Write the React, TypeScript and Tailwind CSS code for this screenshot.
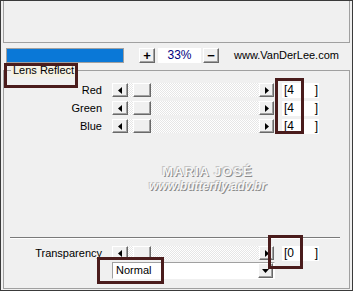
import type { ReactNode } from "react";

function Btn({ children, className }: { children?: ReactNode; className: string }) {
  return (
    <div
      className={
        "flex items-center justify-center bg-[#f0f0f0] border border-t-white border-l-white border-r-[#696969] border-b-[#696969] shadow-[inset_-1px_-1px_0_#a0a0a0] " +
        className
      }
    >
      {children}
    </div>
  );
}

function LeftTri() {
  return (
    <svg width="4" height="7" viewBox="0 0 4 7">
      <polygon points="4,0 4,7 0,3.5" fill="#000" />
    </svg>
  );
}

function RightTri() {
  return (
    <svg width="4" height="7" viewBox="0 0 4 7">
      <polygon points="0,0 0,7 4,3.5" fill="#000" />
    </svg>
  );
}

function DownTri() {
  return (
    <svg width="7" height="4" viewBox="0 0 7 4">
      <polygon points="0,0 7,0 3.5,4" fill="#000" />
    </svg>
  );
}

function SliderRow({ label, value }: { label: string; value: string }) {
  return (
    <div className="flex h-[14px] items-center">
      <div className="w-[99px] pr-[1px] text-right leading-none">{label}</div>
      <Btn className="ml-[9px] h-[14px] w-[16px]">
        <LeftTri />
      </Btn>
      <div className="flex h-[14px] w-[131px] items-center bg-[repeating-conic-gradient(#e6e6e6_0%_25%,#ffffff_0%_50%)] bg-[length:2px_2px]">
        <Btn className="ml-[5px] h-[14px] w-[18px]" />
      </div>
      <Btn className="h-[14px] w-[15px]">
        <RightTri />
      </Btn>
      <div className="ml-[8px] flex h-[15px] w-[37px] items-center justify-between bg-white pl-[2px] pr-[1px] text-[12px] leading-none">
        <span>[{value}</span>
        <span>]</span>
      </div>
    </div>
  );
}

export default function App() {
  return (
    <div className="relative h-[291px] w-[353px] overflow-hidden border border-[#3a3a3a] bg-[#f0f0f0] font-['Liberation_Sans',Arial,sans-serif] text-[11px] text-black">
      {/* preview area */}
      <div className="ml-[2px] h-[42px] w-[347px] border-x border-b border-[#a0a0a0]" />

      {/* progress / zoom row */}
      <div className="mt-[4px] flex h-[16px] items-center">
        <div className="ml-[5px] h-[15px] w-[118px] border border-[#a0a0a0] bg-[#0a78d7]" />
        <Btn className="ml-[15px] h-[15px] w-[16px] text-[13px] font-bold leading-none">+</Btn>
        <div className="ml-[3px] flex h-[15px] w-[43px] items-center justify-center bg-white text-[12px] text-[#000080]">
          33%
        </div>
        <Btn className="ml-[2px] h-[15px] w-[16px] text-[13px] font-bold leading-none">−</Btn>
        <div className="ml-[15px] text-[11px]">www.VanDerLee.com</div>
      </div>

      {/* group box */}
      <div className="relative ml-[2px] mt-[7px] h-[219px] w-[347px] border border-[#a0a0a0]">
        <div className="absolute left-[7px] top-[-7px] bg-[#f4f1e4] px-[2px] text-[11px] leading-[13px]">
          Lens Reflect
        </div>

        <div className="flex flex-col gap-[4px] pt-[12px]">
          <SliderRow label="Red" value="4" />
          <SliderRow label="Green" value="4" />
          <SliderRow label="Blue" value="4" />
        </div>

        <div className="mt-[31px] pl-[62px] text-center font-bold text-[#f6f6f6]">
          <div className="text-[13px] leading-[15px] tracking-[1px] [text-shadow:1px_1px_0_#8c8c8c,-1px_-1px_0_#c4c4c4]">
            MARIA JOSÉ
          </div>
          <div className="text-[12px] italic leading-[14px] [text-shadow:1px_1px_0_#8c8c8c,-1px_-1px_0_#c4c4c4]">
            www.butterfly.adv.br
          </div>
        </div>

        <div className="ml-[6px] mt-[44px] h-[2px] w-[330px] border-t border-b border-t-[#7a7a7a] border-b-white" />

        <div className="mt-[7px]">
          <SliderRow label="Transparency" value="0" />
        </div>

        <div className="ml-[108px] mt-[2px] flex h-[17px] w-[163px] items-center border border-t-[#a0a0a0] border-l-[#a0a0a0] border-r-white border-b-white bg-white">
          <span className="ml-[3px] flex-1 leading-none">Normal</span>
          <Btn className="mr-[1px] h-[15px] w-[15px]">
            <DownTri />
          </Btn>
        </div>
      </div>

      {/* tutorial highlight boxes */}
      <div className="absolute left-[3px] top-[62px] h-[25px] w-[74px] border-[3px] border-[#4a1c1c]" />
      <div className="absolute left-[274px] top-[77px] h-[56px] w-[29px] border-[3px] border-[#4a1c1c]" />
      <div className="absolute left-[267px] top-[234px] h-[34px] w-[35px] border-[3px] border-[#4a1c1c]" />
      <div className="absolute left-[96px] top-[256px] h-[27px] w-[67px] border-[3px] border-[#4a1c1c]" />
    </div>
  );
}
